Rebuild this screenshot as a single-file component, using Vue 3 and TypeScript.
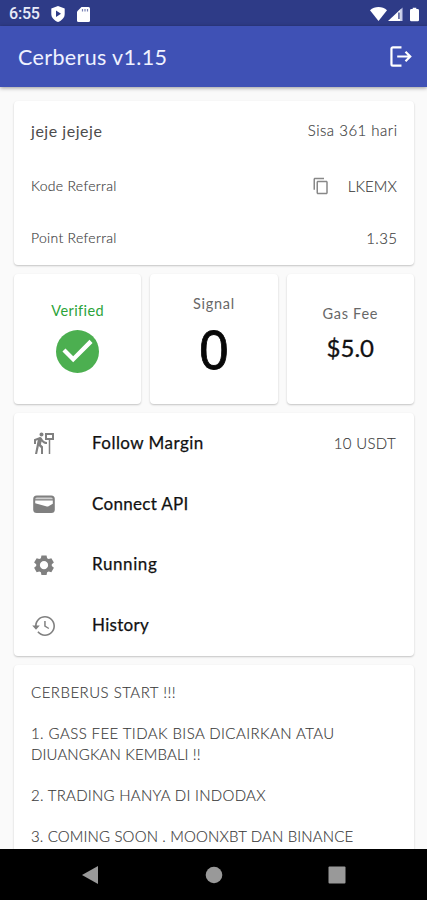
<script setup lang="ts">
interface MenuItem {
  id: string
  label: string
  value?: string
}

const menu: MenuItem[] = [
  { id: 'follow', label: 'Follow Margin', value: '10 USDT' },
  { id: 'connect', label: 'Connect API' },
  { id: 'running', label: 'Running' },
  { id: 'history', label: 'History' },
]
</script>

<template>
  <div class="screen">
    <div class="status">
      <span class="clock">6:55</span>
      <svg class="shield" viewBox="0 0 14 16"><path fill="#fff" d="M7 0l6.700 2.400v5.600c0 3.800-3 6.500-6.700 8C3.300 14.500.3 11.800.3 8V2.400z" /><path fill="#2e3b87" d="M5 4.500l5 3.300-5 3.300z" /></svg>
      <svg class="sd" viewBox="0 0 13 15"><path fill="#fff" d="M4.500 0H11.500a1.500 1.500 0 0 1 1.500 1.500v12a1.500 1.500 0 0 1-1.500 1.500h-10A1.500 1.500 0 0 1 0 13.500V4.500z" /><path stroke="#7780b4" stroke-width="1.200" d="M5.500 2v2.500M8 2v2.500M10.500 2v2.500" /></svg>
      <span class="grow"></span>
      <svg class="wifi" viewBox="0 0 17 14"><path fill="#fff" d="M8.500 14L0 3.300C4.700-1 12.300-1 17 3.300z" /></svg>
      <svg class="signal" viewBox="0 0 15 14"><path fill="#fff" d="M15 0v14H0z" /><path fill="#2e3b87" d="M10.300 5.500h1.300V12h-1.300zM12.800 0H15v14h-2.200z" /><path fill="#c5cae9" d="M12.800 2.200L14.500.5V14h-1.700z" /></svg>
      <svg class="battery" viewBox="0 0 10 15"><path fill="#fff" d="M3 0h4v1.500h1.500A1.500 1.500 0 0 1 10 3v10.500A1.500 1.500 0 0 1 8.500 15h-7A1.500 1.500 0 0 1 0 13.500V3a1.500 1.500 0 0 1 1.500-1.500H3z" /></svg>
    </div>

    <header class="appbar">
      <h1>Cerberus v1.15</h1>
      <svg class="logout" viewBox="0 0 23 22" fill="none" stroke="#fff" stroke-width="2.300"><path d="M12 1.500H3A1.500 1.500 0 0 0 1.500 3v16A1.500 1.500 0 0 0 3 20.500h9M7.500 11H21M16.200 6l5 5-5 5" /></svg>
    </header>

    <main class="content">
      <section class="card profile">
        <div class="row first"><span class="name">jeje jejeje</span><span class="days">Sisa 361 hari</span></div>
        <div class="row second">
          <span class="label">Kode Referral</span>
          <span class="code">
            <svg class="copy" viewBox="0 0 24 24"><path fill="#888" d="M16 1H4c-1.100 0-2 .9-2 2v14h2V3h12V1zm3 4H8c-1.100 0-2 .9-2 2v14c0 1.100.9 2 2 2h11c1.100 0 2-.9 2-2V7c0-1.100-.9-2-2-2zm0 16H8V7h11v14z" /></svg>
            <span class="key">LKEMX</span>
          </span>
        </div>
        <div class="row third"><span class="label point">Point Referral</span><span class="points">1.35</span></div>
      </section>

      <section class="stats">
        <div class="card stat verified">
          <span class="caption">Verified</span>
          <svg class="check" viewBox="2 2 20 20"><circle cx="12" cy="12" r="10" fill="#4caf50" /><path fill="#fff" d="M10 17l-5-5 1.410-1.410L10 14.170l7.590-7.590L19 8z" /></svg>
        </div>
        <div class="card stat signals"><span class="caption">Signal</span><span class="count">0</span></div>
        <div class="card stat gas"><span class="caption">Gas Fee</span><span class="fee">$5.0</span></div>
      </section>

      <section class="card menu">
        <div v-for="item in menu" :key="item.id" class="item" :class="item.id">
          <svg v-if="item.id === 'follow'" class="icon" viewBox="0 0 24 24" fill="#808080"><path d="M9.500 5.500c1.100 0 2-.9 2-2s-.9-2-2-2-2 .9-2 2 .9 2 2 2zM5.750 8.900L3 23h2.100l1.750-8L9 17v6h2v-7.550L8.950 13.400l.6-3C10.850 12 12.800 13 15 13v-2c-1.850 0-3.450-1-4.350-2.450l-.95-1.600C9.350 6.350 8.700 6 8 6c-.25 0-.5.050-.75.150L2 8.300V13h2V9.650l1.750-.75M13 2v7h3.750v14h1.500V9H22V2h-9zm7.010 6-.01-1h-5V4h5.010z" /></svg>
          <svg v-else-if="item.id === 'connect'" class="icon" viewBox="0 0 24 24"><rect x="1.200" y="3.500" width="21.600" height="17.500" rx="3.500" fill="#808080" /><path d="M3.200 7.200q0-1.700 1.700-1.700h14.200q1.700 0 1.700 1.700z" fill="#d0d0d0" /><path d="M3.200 8.500h17.600v3.300l-4.300 2.500q-.8.400-1.600.100L3.200 11.300z" fill="#fff" /></svg>
          <svg v-else-if="item.id === 'running'" class="icon gear" viewBox="0 0 24 24" fill="#808080"><path fill-rule="evenodd" d="M9.200 1.500h5.600l.6 3 1.700 1 2.900-1 2.800 4.900-2.300 1.900v1.900l2.300 1.900-2.800 4.900-2.900-1-1.700 1-.6 3H9.200l-.6-3-1.700-1-2.900 1-2.800-4.900 2.300-1.900v-1.900L1.200 9.400 4 4.500l2.900 1 1.700-1zM12 7.700a4.500 4.500 0 1 0 0 9 4.500 4.500 0 0 0 0-9z" /></svg>
          <svg v-else class="icon" viewBox="0 0 24 24" fill="#808080"><path d="M13 2C7.700 2 3.300 6.200 3 11.500H.2L4 15.800l3.800-4.300H4.700C5 7.100 8.600 3.600 13 3.600c4.600 0 8.400 3.800 8.400 8.400s-3.800 8.400-8.400 8.400c-2.600 0-4.900-1.200-6.500-3.100l-1.200 1C7.200 20.500 9.900 22 13 22c5.500 0 10-4.500 10-10S18.500 2 13 2zM12.200 7v5.500l4.300 2.600.7-1.200-3.500-2.100V7z" /></svg>
          <span class="title">{{ item.label }}</span>
          <span v-if="item.value" class="value">{{ item.value }}</span>
        </div>
      </section>

      <section class="card notes">
        <p class="n1">CERBERUS START !!!</p>
        <p><span class="n2">1. GASS FEE TIDAK BISA DICAIRKAN ATAU</span><br><span class="n3">DIUANGKAN KEMBALI !!</span></p>
        <p class="n4">2. TRADING HANYA DI INDODAX</p>
        <p class="n5">3. COMING SOON . MOONXBT DAN BINANCE</p>
      </section>
    </main>

    <nav class="navbar">
      <svg viewBox="0 0 20 20"><path fill="#999" d="M17 1v18L1 10z" /></svg>
      <svg viewBox="0 0 20 20"><circle cx="10" cy="10" r="8.300" fill="#999" /></svg>
      <svg viewBox="0 0 20 20"><rect x="1.500" y="1.500" width="17" height="17" rx="1" fill="#999" /></svg>
    </nav>
  </div>
</template>

<style>
body { background: #fafafa; overflow: hidden; }
</style>

<style scoped>
.screen { width: 427px; height: 900px; display: flex; flex-direction: column; overflow: hidden; background: #fafafa; font-family: Lato, "Open Sans", sans-serif; color: #3c3c3c; white-space: nowrap; }
svg { display: block; flex: none; }
.status { height: 26px; flex: none; box-sizing: border-box; padding: 2px 8px 0 9px; display: flex; align-items: center; background: #2e3b87; color: #e9ebf8; }
.clock { width: 42px; font: 500 16px/24px Roboto, sans-serif; letter-spacing: -.2px; }
.shield { width: 14px; height: 16px; }
.sd { width: 13px; height: 15px; margin-left: 12px; }
.grow { flex: 1; }
.wifi { width: 17px; height: 14px; margin-right: 1px; }
.signal { width: 15px; height: 14px; }
.battery { width: 9px; height: 15px; margin: 0 0 0 7px; }
.appbar { height: 61px; flex: none; box-sizing: border-box; padding: 0 15px 0 18px; display: flex; align-items: center; justify-content: space-between; background: #3f51b5; box-shadow: 0 1px 4px rgba(0, 0, 0, .4); z-index: 1; }
h1 { margin: 0; font-size: 21.500px; line-height: 28px; font-weight: 400; color: #eff1ff; letter-spacing: .35px; }
.logout { width: 22px; height: 21px; }
.content { flex: 1; min-height: 0; overflow: hidden; padding: 14px 13px 0 14px; display: flex; flex-direction: column; gap: 9px; }
.card { background: #fff; border-radius: 4px; box-shadow: 0 1px 2px rgba(0, 0, 0, .22); flex: none; }
.profile { height: 164px; box-sizing: border-box; padding: 3px 17px 0; }
.row, .value, .notes { font-size: 15px; font-weight: 300; -webkit-text-stroke: .15px #3c3c3c; }
.row { display: flex; justify-content: space-between; align-items: center; }
.first { height: 52px; }
.second { height: 60px; }
.third { height: 44px; }
.name { font-size: 16px; font-weight: 400; color: #4c4c4c; letter-spacing: .54px; -webkit-text-stroke: 0; }
.days { letter-spacing: .5px; margin-right: -.5px; }
.label { font-size: 14px; line-height: 18px; letter-spacing: .3px; }
.code { display: flex; align-items: center; gap: 18px; }
.copy { width: 18px; height: 18px; }
.key { letter-spacing: .1px; }
.points { letter-spacing: .4px; margin-right: -.4px; }
.stats { display: grid; grid-template-columns: repeat(3, 1fr); gap: 9px; height: 130px; flex: none; }
.stat { display: flex; flex-direction: column; align-items: center; }
.caption { font-size: 14.500px; line-height: 20px; color: #686868; letter-spacing: .7px; }
.verified { padding-top: 27px; }
.verified .caption { color: #2ba33a; letter-spacing: .4px; }
.check { width: 43px; height: 43px; margin-top: 9px; }
.signals { padding-top: 20px; }
.count { font-size: 53px; line-height: 60px; color: #080808; font-family: "Noto Sans", sans-serif; margin-top: 5px; -webkit-text-stroke: .8px #080808; }
.gas { padding-top: 30px; }
.fee { font-size: 24px; line-height: 30px; color: #111; margin-top: 9px; -webkit-text-stroke: .3px #111; }
.menu { height: 243px; }
.item { height: 60.800px; display: flex; align-items: center; padding: 0 18px; box-sizing: border-box; }
.icon { width: 24px; height: 24px; margin-right: 36px; }
.gear { width: 22px; height: 22px; margin: 0 37px 0 1px; }
.title { font-size: 17px; line-height: 20px; margin-bottom: 1px; color: #111; letter-spacing: .45px; -webkit-text-stroke: .25px #111; }
.running .title { letter-spacing: .6px; }
.connect .title, .history .title { letter-spacing: .3px; }
.value { margin-left: auto; line-height: 20px; margin-bottom: 1px; letter-spacing: .35px; }
.notes { flex: 1; padding: 17px 17px 0; line-height: 20.600px; }
.notes p { margin: 0 0 20.600px; }
.n1 { letter-spacing: .5px; }
.n2 { letter-spacing: .42px; }
.n3 { letter-spacing: .13px; }
.n4 { letter-spacing: .28px; }
.n5 { letter-spacing: .14px; }
.navbar { height: 51px; flex: none; box-sizing: border-box; background: #000; display: flex; align-items: center; justify-content: center; gap: 103px; z-index: 1; }
.navbar svg { width: 20px; height: 20px; }
</style>
